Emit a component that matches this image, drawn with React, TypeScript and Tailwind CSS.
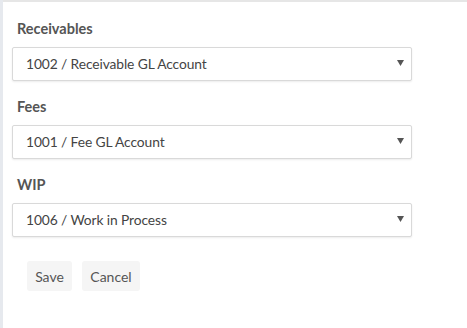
import React from 'react';

const fields = [
  { label: 'Receivables', value: '1002 / Receivable GL Account' },
  { label: 'Fees', value: '1001 / Fee GL Account' },
  { label: 'WIP', value: '1006 / Work in Process' },
];

const Field: React.FC<{ label: string; value: string }> = ({ label, value }) => (
  <div className="flex flex-col">
    <div className="ml-[5px] h-[18px] text-[14.5px] font-bold leading-[18px] text-[#555]">{label}</div>
    <div className="mt-[9px] flex h-[34px] w-[400px] items-center justify-between rounded-[2px] border border-[#d9d9d9] bg-white pl-[13px] pr-[6px] shadow-[0_1px_2px_rgba(0,0,0,0.08)]">
      <span className="text-[13.8px] tracking-[-0.1px] text-[#444]">{value}</span>
      <svg width="7" height="6" viewBox="0 0 7 6" className="mr-[1px] mb-[2px]">
        <path d="M0 0H7L3.5 6Z" fill="#555" />
      </svg>
    </div>
  </div>
);

export default function App() {
  return (
    <div className="h-[328px] w-[467px] bg-white font-['Lato','Noto_Sans',sans-serif]">
      <div className="flex h-full">
        <div className="w-[3px] bg-[#e6e9ee]" />
        <div className="flex-1 border-t-2 border-[#e6e6e6] pl-[9px] pt-[18px]">
          <div className="flex flex-col gap-[17px]">
            {fields.map((f) => (
              <Field key={f.label} label={f.label} value={f.value} />
            ))}
          </div>
          <div className="ml-[15px] mt-[24px] flex gap-[10px]">
            <button className="h-[30px] w-[45px] rounded-[3px] bg-[#f5f5f5] text-[14px] text-[#555]">Save</button>
            <button className="h-[30px] w-[58px] rounded-[3px] bg-[#f5f5f5] text-[14px] text-[#555]">Cancel</button>
          </div>
        </div>
      </div>
    </div>
  );
}
